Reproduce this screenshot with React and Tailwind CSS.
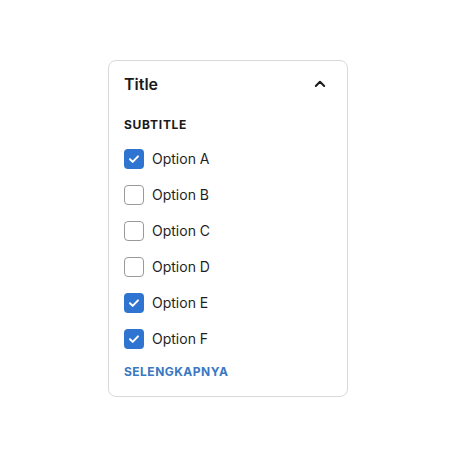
import React, { useState } from "react";

const initial = [
  { label: "Option A", checked: true },
  { label: "Option B", checked: false },
  { label: "Option C", checked: false },
  { label: "Option D", checked: false },
  { label: "Option E", checked: true },
  { label: "Option F", checked: true },
];

function Check({ checked }) {
  if (checked) {
    return (
      <span className="flex h-5 w-5 items-center justify-center rounded-[4px] bg-[#2f74d0]">
        <svg width="14" height="14" viewBox="0 0 14 14" fill="none">
          <path d="M3 7.2l2.7 2.7L11 4.4" stroke="white" strokeWidth="2" strokeLinecap="round" strokeLinejoin="round" />
        </svg>
      </span>
    );
  }
  return <span className="h-5 w-5 rounded-[4px] border border-[#9a9a9a] bg-white" />;
}

export default function App() {
  const [items, setItems] = useState(initial);
  return (
    <div className="flex min-h-screen w-full items-center justify-center bg-white" style={{ fontFamily: "Inter, 'Noto Sans', sans-serif" }}>
      <div className="w-[240px] rounded-[8px] border border-[#d9d9d9] bg-white pb-4 pl-[15px] pr-4 pt-[11px]">
        <div className="flex h-6 items-center justify-between">
          <span className="text-[16px] font-semibold text-[#1a1a1a]">Title</span>
          <svg width="14" height="14" viewBox="0 0 14 14" fill="none" className="mr-[4px]">
            <path d="M2.8 9L7 4.8 11.2 9" stroke="#1a1a1a" strokeWidth="2" strokeLinecap="round" strokeLinejoin="round" />
          </svg>
        </div>
        <div className="mt-[21px] h-4 text-[12px] font-bold leading-4 tracking-[0.06em] text-[#1a1a1a]">SUBTITLE</div>
        <div className="mt-2 flex flex-col">
          {items.map((it, i) => (
            <label
              key={it.label}
              className="flex h-9 cursor-pointer items-center gap-2"
              onClick={() => setItems(items.map((x, j) => (j === i ? { ...x, checked: !x.checked } : x)))}
            >
              <Check checked={it.checked} />
              <span className="text-[14px] text-[#1f1f1f]">{it.label}</span>
            </label>
          ))}
        </div>
        <div className="mt-[7px] h-4 text-[12px] font-bold leading-4 tracking-[0.04em] text-[#3b78c2]">SELENGKAPNYA</div>
      </div>
    </div>
  );
}
